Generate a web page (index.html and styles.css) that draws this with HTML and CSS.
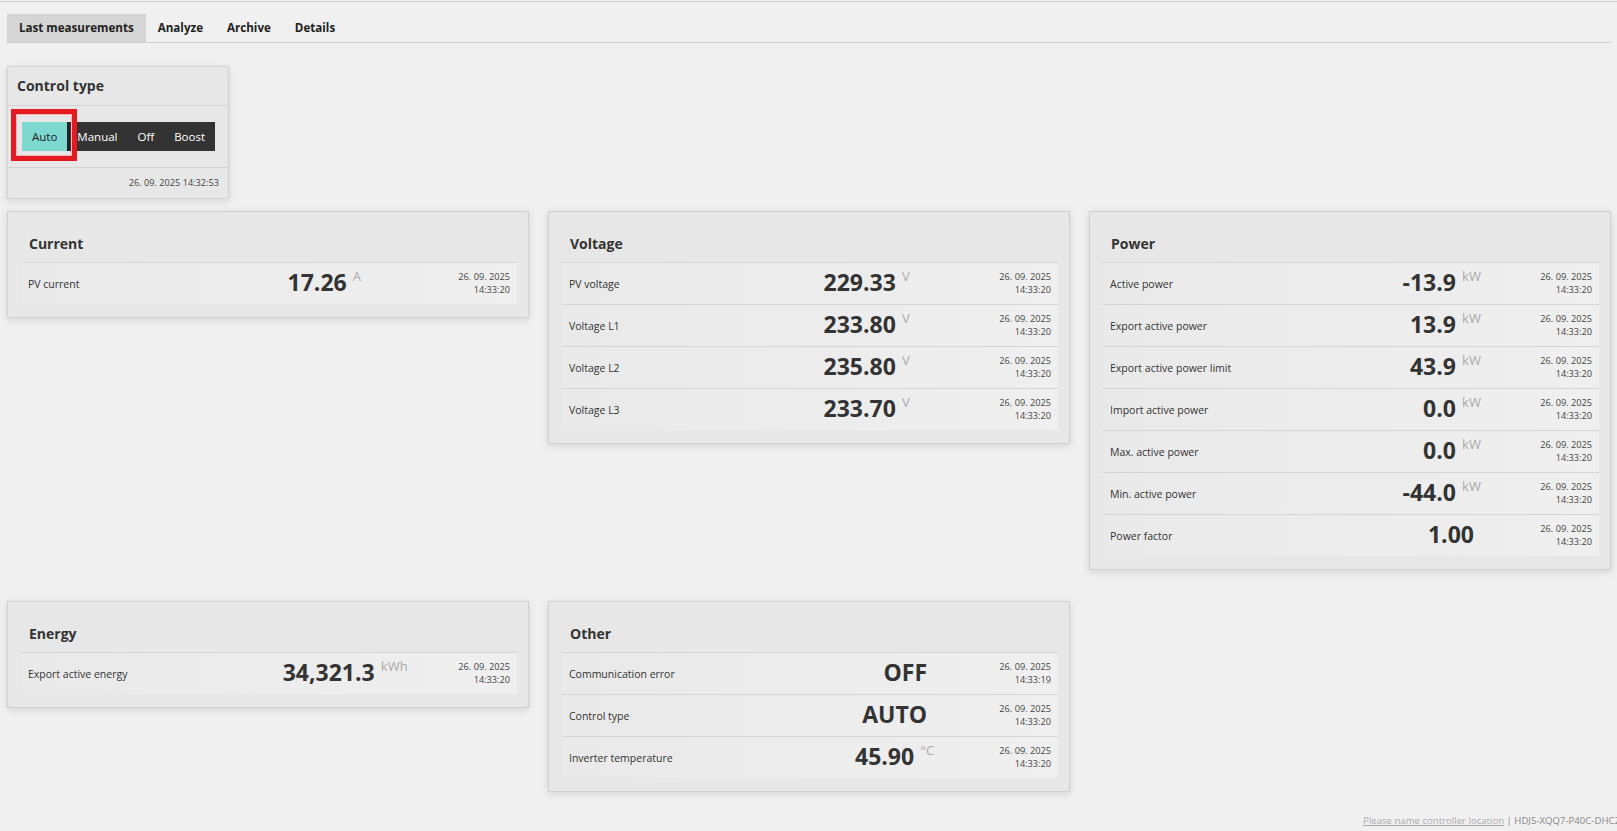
FILE: index.html
```html
<!DOCTYPE html>
<html lang="en">
<head>
  <meta charset="UTF-8">
  <meta name="viewport" content="width=device-width, initial-scale=1.0">
  <title>Last measurements</title>
  <link rel="stylesheet" href="styles.css">
</head>
<body>
  <div class="topline"></div>
  <div class="page">
    <nav class="tabs">
      <a class="tab active">Last measurements</a>
      <a class="tab">Analyze</a>
      <a class="tab">Archive</a>
      <a class="tab">Details</a>
    </nav>

    <div class="control-card">
      <div class="control-head">Control type</div>
      <div class="control-body">
        <div class="mode-group">
          <span class="mode active">Auto</span>
          <span class="mode next">Manual</span>
          <span class="mode">Off</span>
          <span class="mode">Boost</span>
        </div>
        <div class="highlight"></div>
      </div>
      <div class="control-foot">26. 09. 2025 14:32:53</div>
    </div>

    <div class="cards">
      <section class="card">
        <h2>Current</h2>
        <table class="values">
          <tr><td class="label">PV current</td><td class="value"><b>17.26</b> <span class="unit">A</span></td><td class="date">26. 09. 2025<br>14:33:20</td></tr>
        </table>
      </section>

      <section class="card">
        <h2>Voltage</h2>
        <table class="values">
          <tr><td class="label">PV voltage</td><td class="value"><b>229.33</b> <span class="unit">V</span></td><td class="date">26. 09. 2025<br>14:33:20</td></tr>
          <tr><td class="label">Voltage L1</td><td class="value"><b>233.80</b> <span class="unit">V</span></td><td class="date">26. 09. 2025<br>14:33:20</td></tr>
          <tr><td class="label">Voltage L2</td><td class="value"><b>235.80</b> <span class="unit">V</span></td><td class="date">26. 09. 2025<br>14:33:20</td></tr>
          <tr><td class="label">Voltage L3</td><td class="value"><b>233.70</b> <span class="unit">V</span></td><td class="date">26. 09. 2025<br>14:33:20</td></tr>
        </table>
      </section>

      <section class="card">
        <h2>Power</h2>
        <table class="values">
          <tr><td class="label">Active power</td><td class="value"><b>-13.9</b> <span class="unit">kW</span></td><td class="date">26. 09. 2025<br>14:33:20</td></tr>
          <tr><td class="label">Export active power</td><td class="value"><b>13.9</b> <span class="unit">kW</span></td><td class="date">26. 09. 2025<br>14:33:20</td></tr>
          <tr><td class="label">Export active power limit</td><td class="value"><b>43.9</b> <span class="unit">kW</span></td><td class="date">26. 09. 2025<br>14:33:20</td></tr>
          <tr><td class="label">Import active power</td><td class="value"><b>0.0</b> <span class="unit">kW</span></td><td class="date">26. 09. 2025<br>14:33:20</td></tr>
          <tr><td class="label">Max. active power</td><td class="value"><b>0.0</b> <span class="unit">kW</span></td><td class="date">26. 09. 2025<br>14:33:20</td></tr>
          <tr><td class="label">Min. active power</td><td class="value"><b>-44.0</b> <span class="unit">kW</span></td><td class="date">26. 09. 2025<br>14:33:20</td></tr>
          <tr><td class="label">Power factor</td><td class="value plain"><b>1.00</b></td><td class="date">26. 09. 2025<br>14:33:20</td></tr>
        </table>
      </section>

      <section class="card">
        <h2>Energy</h2>
        <table class="values">
          <tr><td class="label">Export active energy</td><td class="value"><b>34,321.3</b> <span class="unit">kWh</span></td><td class="date">26. 09. 2025<br>14:33:20</td></tr>
        </table>
      </section>

      <section class="card">
        <h2>Other</h2>
        <table class="values">
          <tr><td class="label">Communication error</td><td class="value plain"><b>OFF</b></td><td class="date">26. 09. 2025<br>14:33:19</td></tr>
          <tr><td class="label">Control type</td><td class="value plain"><b>AUTO</b></td><td class="date">26. 09. 2025<br>14:33:20</td></tr>
          <tr><td class="label">Inverter temperature</td><td class="value"><b>45.90</b> <span class="unit">°C</span></td><td class="date">26. 09. 2025<br>14:33:20</td></tr>
        </table>
      </section>
    </div>

    <div class="footer"><a href="#">Please name controller location</a> | HDJ5-XQQ7-P40C-DHC2</div>
  </div>
</body>
</html>
```

FILE: styles.css
```css
html, body { margin: 0; padding: 0; }
body {
  background: #f0f0f0;
  color: #333;
  font-family: 'Open Sans', 'Liberation Sans', sans-serif;
  overflow-x: hidden;
}
.topline { height: 1px; margin-top: 1px; background: #cdcdcd; }
.page { padding: 0 6px 0 7px; }

/* tabs */
.tabs { display: flex; margin-top: 12px; border-bottom: 1px solid #cfcfcf; }
.tab { padding: 0 12px; height: 28px; line-height: 28px; font-size: 11.6px; font-weight: bold; color: #222; cursor: pointer; }
.tab.active { background: #d5d5d5; }

/* control type box */
.control-card {
  width: 222px; box-sizing: border-box;
  margin-top: 23px;
  background: #e7e7e7;
  border: 1px solid #d2d2d2;
  box-shadow: 0 2px 8px rgba(0,0,0,0.12);
}
.control-head { padding: 9px 9px; font-size: 14px; line-height: 20px; font-weight: bold; color: #333; border-bottom: 1px solid #d3d3d3; }
.control-body { position: relative; padding: 16px 14px; }
.mode-group { display: inline-flex; background: #333; }
.mode { padding: 0 10px; height: 29px; line-height: 29px; font-size: 11.5px; color: #fff; }
.mode.active { background: #7dd9d0; color: #222; }
.mode.next { border-left: 3px solid #222; padding-left: 7px; }
.highlight {
  position: absolute; left: 3px; top: 3px;
  width: 66px; height: 52px; box-sizing: border-box;
  border: 5px solid #e31a1f;
  box-shadow: inset 0 0 0 1px #f2b4b4;
}
.control-foot { padding: 9px 9px; font-size: 9.2px; line-height: 12px; text-align: right; color: #444; border-top: 1px solid #d3d3d3; }

/* measurement cards */
.cards {
  display: grid;
  grid-template-columns: repeat(3, 1fr);
  column-gap: 19px; row-gap: 31px;
  align-items: start;
  margin-top: 12px;
}
.card {
  background: #e7e7e7;
  border: 1px solid #d0d0d0;
  box-shadow: 0 2px 8px rgba(0,0,0,0.12);
  padding: 22px 11px 13px 13px;
}
.card h2 { margin: 0; padding: 0 8px 8px; font-size: 14px; line-height: 20px; font-weight: bold; color: #333; }
.values { width: 100%; border-collapse: separate; border-spacing: 0; background: linear-gradient(90deg, #e9e9e9, #efefef); }
.values td { height: 42px; padding: 0 7px; border-top: 1px solid #d4d4d4; vertical-align: middle; box-sizing: border-box; }
.values .label { font-size: 10.5px; line-height: 14px; color: #333; }
.values .value { text-align: right; white-space: nowrap; line-height: 24px; }
.values .value b { font-size: 23px; font-weight: bold; color: #333; }
.values .value.plain { padding-right: 14px; }
.values .unit { margin-left: 2px; font-size: 13px; color: #aaa; line-height: 0; vertical-align: 10px; }
.values .date { text-align: right; white-space: nowrap; font-size: 9.2px; line-height: 13px; color: #444; padding-bottom: 2px; }

.footer { margin-top: 23px; margin-right: -9px; text-align: right; white-space: nowrap; font-size: 9.6px; line-height: 12px; color: #888; }
.footer a { color: #aaa; }
```
